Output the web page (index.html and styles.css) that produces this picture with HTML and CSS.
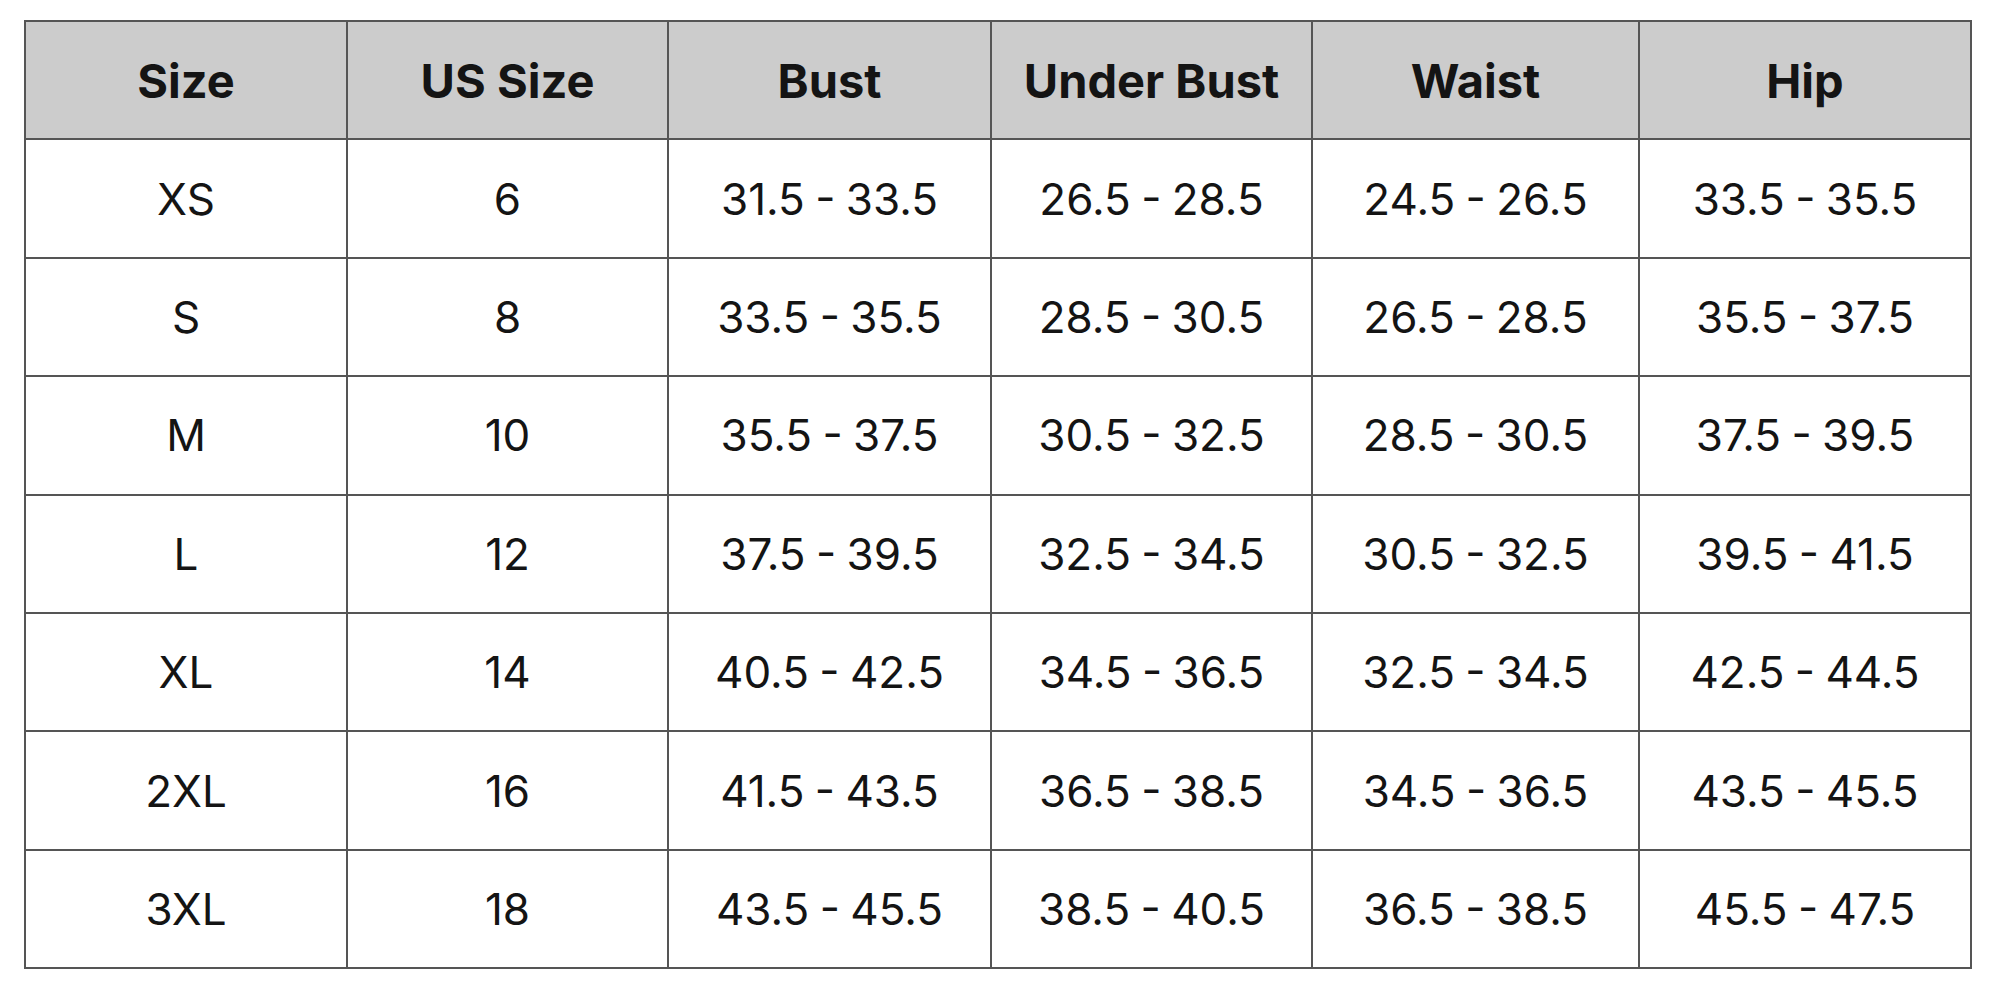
FILE: index.html
```html
<!DOCTYPE html>
<html lang="en">
<head>
<meta charset="utf-8">
<title>Size Chart</title>
<link rel="stylesheet" href="styles.css">
</head>
<body>
<div class="page">
<table class="chart">
<colgroup>
<col class="c1"><col class="c2"><col class="c3"><col class="c4"><col class="c5"><col class="c6">
</colgroup>
<thead>
<tr><th>Size</th><th>US Size</th><th>Bust</th><th>Under Bust</th><th>Waist</th><th>Hip</th></tr>
</thead>
<tbody>
<tr><td>XS</td><td>6</td><td>31.5 - 33.5</td><td>26.5 - 28.5</td><td>24.5 - 26.5</td><td>33.5 - 35.5</td></tr>
<tr><td>S</td><td>8</td><td>33.5 - 35.5</td><td>28.5 - 30.5</td><td>26.5 - 28.5</td><td>35.5 - 37.5</td></tr>
<tr><td>M</td><td>10</td><td>35.5 - 37.5</td><td>30.5 - 32.5</td><td>28.5 - 30.5</td><td>37.5 - 39.5</td></tr>
<tr><td>L</td><td>12</td><td>37.5 - 39.5</td><td>32.5 - 34.5</td><td>30.5 - 32.5</td><td>39.5 - 41.5</td></tr>
<tr><td>XL</td><td>14</td><td>40.5 - 42.5</td><td>34.5 - 36.5</td><td>32.5 - 34.5</td><td>42.5 - 44.5</td></tr>
<tr><td>2XL</td><td>16</td><td>41.5 - 43.5</td><td>36.5 - 38.5</td><td>34.5 - 36.5</td><td>43.5 - 45.5</td></tr>
<tr><td>3XL</td><td>18</td><td>43.5 - 45.5</td><td>38.5 - 40.5</td><td>36.5 - 38.5</td><td>45.5 - 47.5</td></tr>
</tbody>
</table>
</div>
</body>
</html>
```
FILE: styles.css
```css
html, body {
  margin: 0;
  padding: 0;
  background: #ffffff;
}
.page {
  padding: 20px 0 0 24px;
}
.chart {
  border-collapse: collapse;
  table-layout: fixed;
  width: 1946px;
  font-family: Inter, "Liberation Sans", sans-serif;
  color: #141414;
  border: 2px solid #2e2e2e;
}
.c1 { width: 322px; }
.c2 { width: 321px; }
.c3 { width: 323px; }
.c4 { width: 321px; }
.c5 { width: 327px; }
.c6 { width: 332px; }
.chart th,
.chart td {
  border: 2px solid #555555;
  text-align: center;
  vertical-align: middle;
  padding: 0;
  height: 116.4px;
}
.chart th {
  background: #cccccc;
  font-weight: 700;
  font-size: 47px;
}
.chart td {
  font-weight: 400;
  font-size: 44px;
  word-spacing: -2px;
}
```
